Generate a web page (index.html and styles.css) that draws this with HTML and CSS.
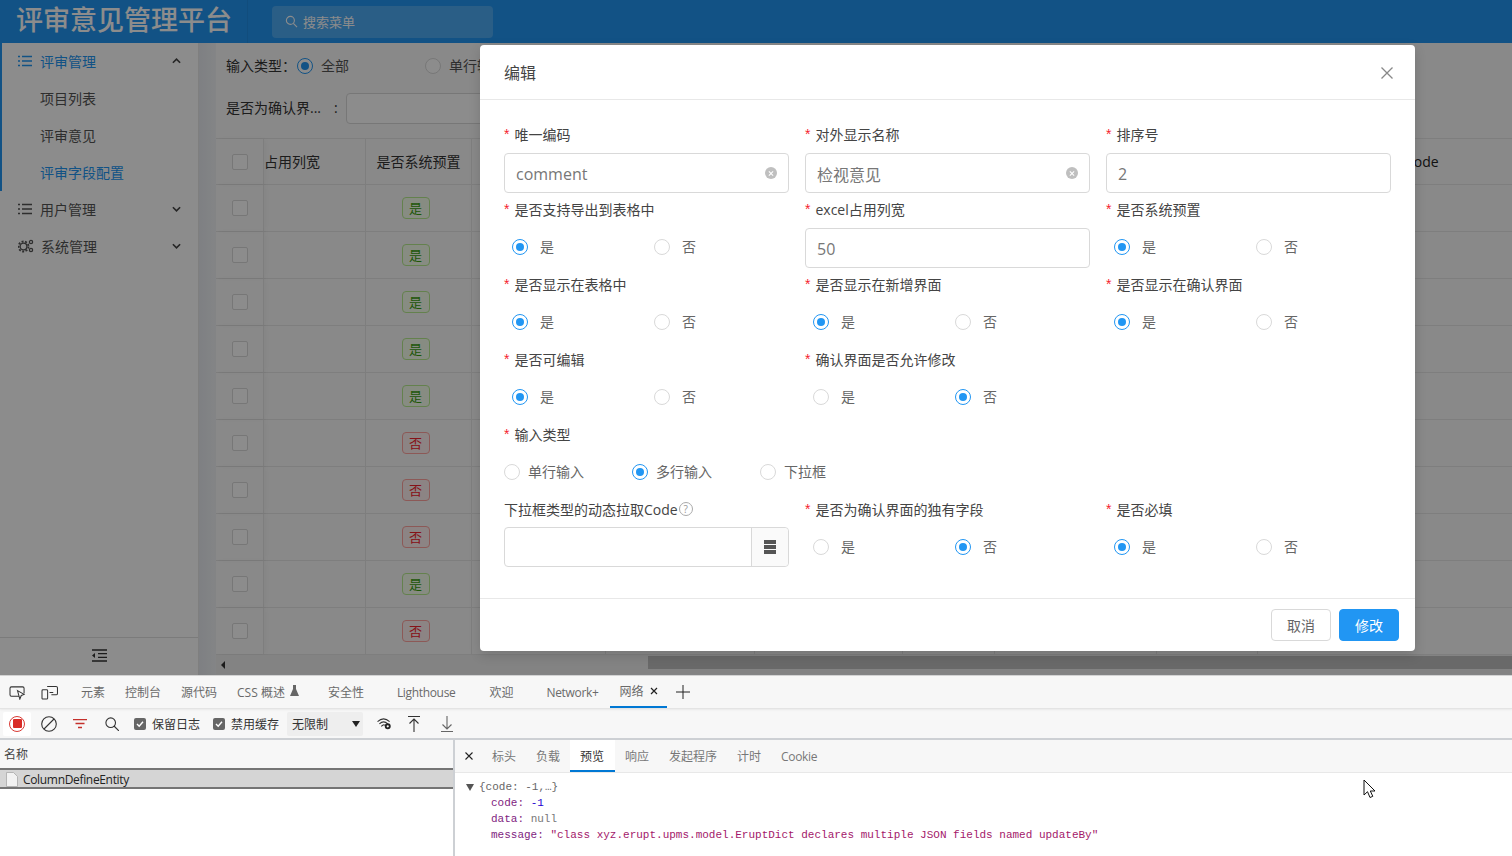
FILE: index.html
```html
<!DOCTYPE html>
<html lang="zh-CN">
<head>
<meta charset="utf-8">
<title>评审意见管理平台</title>
<link rel="stylesheet" href="styles.css">
</head>
<body>
<div class="app">
  <header class="topbar">
    <div class="brand">评审意见管理平台</div>
    <div class="search">
      <svg class="search-icon" viewBox="0 0 14 14"><circle cx="5.8" cy="5.8" r="4.3"/><path d="M9 9l4 4"/></svg>
      <span>搜索菜单</span>
    </div>
  </header>
  <div class="app-body">
    <aside class="sidebar">
      <nav class="menu">
        <div class="menu-group">
          <div class="menu-item active">
            <svg class="menu-icon" viewBox="0 0 14 12"><path d="M4 1.5h10M4 6h10M4 10.5h10M0 1.5h2M0 6h2M0 10.5h2"/></svg>
            <span class="menu-text">评审管理</span>
            <svg class="chev" viewBox="0 0 10 6"><path d="M1 5l4-4 4 4"/></svg>
          </div>
          <div class="menu-item sub">项目列表</div>
          <div class="menu-item sub">评审意见</div>
          <div class="menu-item sub active">评审字段配置</div>
        </div>
        <div class="menu-item">
          <svg class="menu-icon" viewBox="0 0 14 12"><path d="M4 1.5h10M4 6h10M4 10.5h10M0 1.5h2M0 6h2M0 10.5h2"/></svg>
          <span class="menu-text">用户管理</span>
          <svg class="chev" viewBox="0 0 10 6"><path d="M1 1l4 4 4-4"/></svg>
        </div>
        <div class="menu-item">
          <svg class="menu-icon gears" viewBox="0 0 16 14"><circle cx="5.5" cy="7.5" r="3.4"/><circle cx="5.5" cy="7.5" r="5" class="dash"/><circle cx="13" cy="3" r="1.6"/><circle cx="13" cy="11" r="1.6"/></svg>
          <span class="menu-text">系统管理</span>
          <svg class="chev" viewBox="0 0 10 6"><path d="M1 1l4 4 4-4"/></svg>
        </div>
      </nav>
      <div class="side-foot">
        <svg class="fold" viewBox="0 0 15 13"><path d="M0 1h15M6 4.7h9M6 8.3h9M0 12h15"/><path class="fold-arrow" d="M3 4v5L0 6.500z"/></svg>
      </div>
    </aside>
    <main class="content">
      <section class="filters">
        <div class="filter-row">
          <span class="filter-label">输入类型：</span>
          <span class="radio bg-radio on"></span><span class="bg-opt">全部</span>
          <span class="radio bg-radio second"></span><span class="bg-opt">单行输入</span>
        </div>
        <div class="filter-row lower">
          <span class="filter-label trunc">是否为确认界...</span>
          <span class="colon">:</span>
          <span class="filter-input"></span>
        </div>
      </section>
      <section class="table">
        <div class="tr th">
          <div class="td c0"><span class="check"></span></div>
          <div class="td c1 clip">占用列宽</div>
          <div class="td c2">是否系统预置</div>
          <div class="td c3"></div><div class="td c4"></div><div class="td c5"></div><div class="td c6"></div><div class="td c7"></div><div class="td c8"></div>
          <div class="td c9 code-head">Code</div>
        </div>
        <div class="tr"><div class="td c0"><span class="check"></span></div><div class="td c1"></div><div class="td c2"><span class="tag yes">是</span></div><div class="td c3"></div><div class="td c4"></div><div class="td c5"></div><div class="td c6"></div><div class="td c7"></div><div class="td c8"></div><div class="td c9"></div></div>
        <div class="tr"><div class="td c0"><span class="check"></span></div><div class="td c1"></div><div class="td c2"><span class="tag yes">是</span></div><div class="td c3"></div><div class="td c4"></div><div class="td c5"></div><div class="td c6"></div><div class="td c7"></div><div class="td c8"></div><div class="td c9"></div></div>
        <div class="tr"><div class="td c0"><span class="check"></span></div><div class="td c1"></div><div class="td c2"><span class="tag yes">是</span></div><div class="td c3"></div><div class="td c4"></div><div class="td c5"></div><div class="td c6"></div><div class="td c7"></div><div class="td c8"></div><div class="td c9"></div></div>
        <div class="tr"><div class="td c0"><span class="check"></span></div><div class="td c1"></div><div class="td c2"><span class="tag yes">是</span></div><div class="td c3"></div><div class="td c4"></div><div class="td c5"></div><div class="td c6"></div><div class="td c7"></div><div class="td c8"></div><div class="td c9"></div></div>
        <div class="tr"><div class="td c0"><span class="check"></span></div><div class="td c1"></div><div class="td c2"><span class="tag yes">是</span></div><div class="td c3"></div><div class="td c4"></div><div class="td c5"></div><div class="td c6"></div><div class="td c7"></div><div class="td c8"></div><div class="td c9"></div></div>
        <div class="tr"><div class="td c0"><span class="check"></span></div><div class="td c1"></div><div class="td c2"><span class="tag no">否</span></div><div class="td c3"></div><div class="td c4"></div><div class="td c5"></div><div class="td c6"></div><div class="td c7"></div><div class="td c8"></div><div class="td c9"></div></div>
        <div class="tr"><div class="td c0"><span class="check"></span></div><div class="td c1"></div><div class="td c2"><span class="tag no">否</span></div><div class="td c3"></div><div class="td c4"></div><div class="td c5"></div><div class="td c6"></div><div class="td c7"></div><div class="td c8"></div><div class="td c9"></div></div>
        <div class="tr"><div class="td c0"><span class="check"></span></div><div class="td c1"></div><div class="td c2"><span class="tag no">否</span></div><div class="td c3"></div><div class="td c4"></div><div class="td c5"></div><div class="td c6"></div><div class="td c7"></div><div class="td c8"></div><div class="td c9"></div></div>
        <div class="tr"><div class="td c0"><span class="check"></span></div><div class="td c1"></div><div class="td c2"><span class="tag yes">是</span></div><div class="td c3"></div><div class="td c4"></div><div class="td c5"></div><div class="td c6"></div><div class="td c7"></div><div class="td c8"></div><div class="td c9"></div></div>
        <div class="tr"><div class="td c0"><span class="check"></span></div><div class="td c1"></div><div class="td c2"><span class="tag no">否</span></div><div class="td c3"></div><div class="td c4"></div><div class="td c5"></div><div class="td c6"></div><div class="td c7"></div><div class="td c8"></div><div class="td c9"></div></div>
      </section>
      <div class="hscroll">
        <svg class="hscroll-arrow" viewBox="0 0 4 8"><path d="M4 0v8L0 4z"/></svg>
        <div class="hscroll-thumb"></div>
      </div>
    </main>
  </div>
  <div class="mask"></div>
  <div class="modal">
    <div class="modal-head">
      <span class="modal-title">编辑</span>
      <svg class="modal-close" viewBox="0 0 12 12"><path d="M.5.500l11 11M11.500.500l-11 11"/></svg>
    </div>
    <form class="modal-body">
      <div class="field">
        <label class="lbl req">唯一编码</label>
        <div class="input">comment<span class="clear"></span></div>
      </div>
      <div class="field">
        <label class="lbl req">对外显示名称</label>
        <div class="input">检视意见<span class="clear"></span></div>
      </div>
      <div class="field">
        <label class="lbl req">排序号</label>
        <div class="input">2</div>
      </div>

      <div class="field">
        <label class="lbl req">是否支持导出到表格中</label>
        <div class="radios"><span class="opt"><span class="radio on"></span>是</span><span class="opt"><span class="radio"></span>否</span></div>
      </div>
      <div class="field">
        <label class="lbl req">excel占用列宽</label>
        <div class="input">50</div>
      </div>
      <div class="field">
        <label class="lbl req">是否系统预置</label>
        <div class="radios"><span class="opt"><span class="radio on"></span>是</span><span class="opt"><span class="radio"></span>否</span></div>
      </div>

      <div class="field">
        <label class="lbl req">是否显示在表格中</label>
        <div class="radios"><span class="opt"><span class="radio on"></span>是</span><span class="opt"><span class="radio"></span>否</span></div>
      </div>
      <div class="field">
        <label class="lbl req">是否显示在新增界面</label>
        <div class="radios"><span class="opt"><span class="radio on"></span>是</span><span class="opt"><span class="radio"></span>否</span></div>
      </div>
      <div class="field">
        <label class="lbl req">是否显示在确认界面</label>
        <div class="radios"><span class="opt"><span class="radio on"></span>是</span><span class="opt"><span class="radio"></span>否</span></div>
      </div>

      <div class="field">
        <label class="lbl req">是否可编辑</label>
        <div class="radios"><span class="opt"><span class="radio on"></span>是</span><span class="opt"><span class="radio"></span>否</span></div>
      </div>
      <div class="field span2">
        <label class="lbl req">确认界面是否允许修改</label>
        <div class="radios"><span class="opt"><span class="radio"></span>是</span><span class="opt"><span class="radio on"></span>否</span></div>
      </div>

      <div class="field span3">
        <label class="lbl req">输入类型</label>
        <div class="radios flush"><span class="opt"><span class="radio"></span>单行输入</span><span class="opt"><span class="radio on"></span>多行输入</span><span class="opt"><span class="radio"></span>下拉框</span></div>
      </div>

      <div class="field">
        <label class="lbl tight">下拉框类型的动态拉取Code<span class="help">?</span></label>
        <div class="input group"><span class="addon">
          <svg class="addon-icon" viewBox="0 0 12 14"><path d="M0 0h12v4H0zM0 5h12v4H0zM0 10h12v4H0z"/></svg>
        </span></div>
      </div>
      <div class="field">
        <label class="lbl req">是否为确认界面的独有字段</label>
        <div class="radios"><span class="opt"><span class="radio"></span>是</span><span class="opt"><span class="radio on"></span>否</span></div>
      </div>
      <div class="field">
        <label class="lbl req">是否必填</label>
        <div class="radios"><span class="opt"><span class="radio on"></span>是</span><span class="opt"><span class="radio"></span>否</span></div>
      </div>
    </form>
    <div class="modal-foot">
      <button class="btn" type="button">取消</button>
      <button class="btn primary" type="button">修改</button>
    </div>
  </div>
</div>

<div class="devtools">
  <div class="dt-tabs">
    <svg class="dt-ico" viewBox="0 0 18 16"><path d="M11 12H2.500Q1 12 1 10.500v-7Q1 2 2.500 2h12Q16 2 16 3.500V9"/><path class="solid" d="M9 6l7 4-3 1.200L11.500 15z"/></svg>
    <svg class="dt-ico second" viewBox="0 0 18 16"><path d="M6.500 1.500h9.500q1.500 0 1.500 1.500v6q0 1.500-1.500 1.500H11"/><rect x="1" y="5" width="6" height="10" rx="1"/><path d="M9 8h4"/></svg>
    <span class="tab first">元素</span>
    <span class="tab">控制台</span>
    <span class="tab">源代码</span>
    <span class="tab css">CSS 概述</span>
    <svg class="flask" viewBox="0 0 9 11"><path d="M3 0h3v4l3 7H0l3-7z"/></svg>
    <span class="tab wide">安全性</span>
    <span class="tab wide latin lh">Lighthouse</span>
    <span class="tab wide">欢迎</span>
    <span class="tab wide latin">Network+</span>
    <span class="tab current">网络<svg class="tab-x" viewBox="0 0 8 8"><path d="M1 1l6 6M7 1L1 7"/></svg></span>
    <svg class="tab-plus" viewBox="0 0 14 14"><path d="M7 0v14M0 7h14"/></svg>
  </div>
  <div class="dt-toolbar">
    <span class="record"><span class="record-dot"></span></span>
    <svg class="tool block" viewBox="0 0 16 16"><circle cx="8" cy="8" r="7.300"/><path d="M3 13L13 3"/></svg>
    <svg class="tool filter" viewBox="0 0 14 10"><path d="M0 .500h14M2.500 4.500h9M5 8.500h4"/></svg>
    <svg class="tool find" viewBox="0 0 14 14"><circle cx="5.700" cy="5.700" r="4.800"/><path d="M9 9l5 5"/></svg>
    <span class="chk"><svg viewBox="0 0 12 12"><path d="M3 6l2.200 2.300L9 3.800"/></svg></span><span class="chk-text">保留日志</span>
    <span class="chk"><svg viewBox="0 0 12 12"><path d="M3 6l2.200 2.300L9 3.800"/></svg></span><span class="chk-text">禁用缓存</span>
    <span class="throttle">无限制<span class="caret"></span></span>
    <svg class="tool wifi" viewBox="0 0 16 14"><path d="M.500 5Q7-1 13.500 5M2.500 7.500Q7 3 11.500 7.500M4.500 10Q7 7.500 8.500 9"/><circle class="gear" cx="11.500" cy="10" r="2.200"/></svg>
    <svg class="tool up" viewBox="0 0 14 16"><path d="M1 .500h12M7 3v13M2.500 7.500L7 3l4.500 4.500"/></svg>
    <svg class="tool down" viewBox="0 0 14 16"><path d="M1 15.500h12M7 0v13M2.500 8.500L7 13l4.500-4.500"/></svg>
  </div>
  <div class="dt-split">
    <div class="names">
      <div class="names-head">名称</div>
      <div class="names-row">
        <svg class="doc" viewBox="0 0 12 15"><path d="M.500.500h7l4 4v10h-11z"/></svg>
        <span class="latin">ColumnDefineEntity</span>
      </div>
    </div>
    <div class="detail">
      <div class="detail-tabs">
        <svg class="detail-x" viewBox="0 0 8 8"><path d="M.500.500l7 7M7.500.500l-7 7"/></svg>
        <span class="dtab">标头</span>
        <span class="dtab">负载</span>
        <span class="dtab current">预览</span>
        <span class="dtab">响应</span>
        <span class="dtab">发起程序</span>
        <span class="dtab">计时</span>
        <span class="dtab latin">Cookie</span>
      </div>
      <div class="json">
        <div class="json-line root"><span class="tri"></span>{code: -1,…}</div>
        <div class="json-line"><span class="k">code:</span> <span class="n">-1</span></div>
        <div class="json-line"><span class="k">data:</span> <span class="nul">null</span></div>
        <div class="json-line"><span class="k">message:</span> <span class="s">"class xyz.erupt.upms.model.EruptDict declares multiple JSON fields named updateBy"</span></div>
      </div>
    </div>
  </div>
  <svg class="cursor" viewBox="0 0 13 20"><path d="M1 1v15l3.500-3.300L7 18.500l2.800-1.200L7.300 12H12z"/></svg>
</div>
</body>
</html>
```
FILE: styles.css
```css
* { box-sizing: border-box; }
html, body { margin: 0; padding: 0; }
body {
  width: 1512px;
  height: 856px;
  overflow: hidden;
  background: #fff;
  font-family: "Open Sans", "Noto Sans CJK SC", sans-serif;
  font-size: 14px;
  color: #333;
  position: relative;
}
svg { display: block; flex: none; }

.app { position: relative; height: 675px; overflow: hidden; background: #f0f2f5; }
.mask { position: absolute; inset: 0; background: rgba(0, 0, 0, .45); }

/* top bar */
.topbar { height: 43px; background: #2196f3; display: flex; align-items: center; }
.brand {
  width: 248px; height: 43px; padding: 0 0 0 16px;
  font-size: 27px; line-height: 38px; color: #fff; font-weight: 500;
  font-family: "Noto Sans CJK SC", sans-serif;
  border-right: 1px solid rgba(0, 0, 0, .06);
  white-space: nowrap;
}
.search {
  margin-left: 24px; width: 221px; height: 32px; border-radius: 4px;
  background: rgba(255, 255, 255, .2); color: #fff; font-size: 13px;
  display: flex; align-items: center; padding-left: 13px; gap: 5px;
}
.search-icon { width: 13px; height: 13px; fill: none; stroke: #fff; stroke-width: 1.200; }

.app-body { display: flex; height: 632px; }

/* sidebar */
.sidebar {
  width: 199px; flex: none; background: #fff; border-right: 1px solid #e8e8e8;
  display: flex; flex-direction: column; justify-content: space-between;
}
.menu-group { border-left: 2px solid #2196f3; }
.menu-item {
  height: 37px; display: flex; align-items: center; padding: 0 0 2px 18px;
  color: #555; font-size: 14px; position: relative;
}
.menu-group .menu-item { padding-left: 16px; }
.menu-group .menu-item.sub { padding-left: 38px; }
.menu-item.active { color: #2196f3; }
.menu-icon { width: 14px; height: 12px; fill: none; stroke: currentColor; stroke-width: 1.300; margin-right: 8px; }
.gears { width: 16px; height: 14px; margin-right: 7px; }
.gears .dash { stroke-dasharray: 2 1.500; stroke-width: 1.800; }
.menu-text { flex: 1; }
.chev { width: 9px; height: 6px; fill: none; stroke: #444; stroke-width: 1.800; margin-right: 17px; }
.side-foot { height: 38px; border-top: 1px solid #e0e0e0; padding-bottom: 2px; display: flex; align-items: center; justify-content: center; }
.fold { width: 15px; height: 13px; fill: none; stroke: #333; stroke-width: 1.300; }
.fold-arrow { fill: #333; stroke: none; }

/* content */
.content {
  flex: 1; min-width: 0; padding-left: 17px; display: flex; flex-direction: column;
  background: linear-gradient(90deg, #e6e9ee, #f0f2f5 17px);
  overflow: hidden;
}
.filters { height: 96px; flex: none; background: #fafafa; padding: 7px 0 0 10px; border-bottom: 1px solid #e5e5e5; }
.filter-row { height: 32px; display: flex; align-items: center; padding-bottom: 2px; color: #333; white-space: nowrap; }
.filter-row.lower { margin-top: 10px; }
.filter-label { width: 71px; }
.filter-label.trunc { width: 100px; }
.colon { width: 20px; padding-left: 8px; }
.filter-input { width: 300px; height: 31px; margin-top: 3px; background: #fff; border: 1px solid #d9d9d9; border-radius: 4px; }
.bg-opt { width: 104px; margin-left: 8px; color: #555; }
.bg-radio { margin-top: 2px; }

.table { flex: none; width: 1296px; background: #fafafa; }
.tr { height: 47px; display: flex; border-bottom: 1px solid #e5e5e5; flex: none; }
.th { height: 46px; color: #333; }
.td { height: 100%; border-right: 1px solid #e5e5e5; display: flex; align-items: center; justify-content: center; white-space: nowrap; overflow: hidden; flex: none; }
.th .c1, .th .c2 { padding-bottom: 2px; }
.c0 { width: 48px; box-shadow: 2px 0 6px rgba(0, 0, 0, .04); }
.c1 { width: 102px; }
.c1.clip { justify-content: flex-start; padding-left: 0; }
.c2 { width: 106px; }
.c3 { width: 134px; }
.c4 { width: 149px; }
.c5 { width: 148px; }
.c6 { width: 92px; }
.c7 { width: 162px; }
.c8 { width: 101px; }
.c9 { width: 254px; border-right: 0; }
.code-head { justify-content: flex-start; padding-left: 147px; font-size: 14px; color: #222; }
.check { width: 16px; height: 16px; background: #fff; border: 1px solid #d9d9d9; border-radius: 2px; }
.tag { width: 28px; height: 22px; margin-left: -6px; padding-bottom: 2px; border: 1px solid; border-radius: 4px; display: flex; align-items: center; justify-content: center; font-size: 13px; }
.tag.yes { background: #f6ffed; border-color: #b7eb8f; color: #389e0d; }
.tag.no { background: #fff1f0; border-color: #ffa39e; color: #f5222d; }

.hscroll { height: 19px; flex: none; background: #efefef; position: relative; display: flex; align-items: center; padding-left: 5px; }
.hscroll-arrow { width: 4px; height: 8px; fill: #333; }
.hscroll-thumb { height: 13px; margin-left: 423px; flex: 1; background: #bfbfbf; align-self: flex-start; margin-top: 1px; }

/* radio */
.radio { width: 16px; height: 16px; border-radius: 50%; border: 1px solid #d9d9d9; background: #fff; display: inline-block; flex: none; position: relative; }
.radio.on { border-color: #2196f3; }
.radio.on::after { content: ""; position: absolute; inset: 3px; border-radius: 50%; background: #2196f3; }

/* modal */
.modal {
  position: absolute; left: 480px; top: 45px; width: 935px; height: 606px;
  background: #fff; border-radius: 4px; display: flex; flex-direction: column;
  box-shadow: 0 4px 12px rgba(0, 0, 0, .15);
}
.modal-head { height: 55px; flex: none; padding: 0 22px 0 24px; border-bottom: 1px solid #e8e8e8; display: flex; align-items: center; justify-content: space-between; }
.modal-title { font-size: 16px; color: #444; }
.modal-close { width: 12px; height: 12px; margin-top: 2px; fill: none; stroke: #888; stroke-width: 1.300; }
.modal-body {
  flex: 1; padding: 24px 24px 0; display: grid;
  grid-template-columns: repeat(3, 285px); grid-auto-rows: 75px; column-gap: 16px;
}
.field { min-width: 0; }
.span2 { grid-column: span 2; }
.span3 { grid-column: span 3; }
.lbl { display: flex; align-items: center; height: 22px; margin-bottom: 7px; padding-bottom: 2px; font-size: 14px; color: #444; white-space: nowrap; }
.lbl.tight { margin-bottom: 6px; }
.lbl.req::before { content: "*"; color: #f5222d; margin-right: 5px; font-size: 14px; font-family: "Liberation Sans", sans-serif; }
.help { width: 14px; height: 14px; margin-left: 1px; border: 1px solid #aaa; border-radius: 50%; color: #999; font-size: 10px; display: flex; align-items: center; justify-content: center; }
.input {
  height: 40px; border: 1px solid #d9d9d9; border-radius: 4px; padding: 2px 11px 0;
  font-size: 16px; color: #777; display: flex; align-items: center; position: relative;
  font-family: "Open Sans", "Noto Sans CJK SC", sans-serif;
}
.clear { position: absolute; right: 11px; top: 13px; width: 12px; height: 12px; border-radius: 50%; background: #bfbfbf; }
.clear::before, .clear::after { content: ""; position: absolute; left: 3px; top: 5.500px; width: 6px; height: 1px; background: #fff; transform: rotate(45deg); }
.clear::after { transform: rotate(-45deg); }
.input.group { padding: 0; justify-content: flex-end; }
.addon { width: 37px; height: 100%; border-left: 1px solid #d9d9d9; background: #fafafa; border-radius: 0 4px 4px 0; display: flex; align-items: center; justify-content: center; }
.addon-icon { width: 12px; height: 14px; fill: #555; }
.radios { height: 38px; display: flex; align-items: center; padding-left: 8px; color: #666; font-size: 14px; }
.opt { width: 142px; flex: none; display: flex; align-items: center; gap: 12px; padding-bottom: 2px; }
.opt .radio { margin-top: 2px; }
.radios.flush { padding-left: 0; }
.radios.flush .opt { width: 128px; gap: 8px; }
.modal-foot { height: 53px; flex: none; border-top: 1px solid #e8e8e8; padding-right: 16px; display: flex; align-items: center; justify-content: flex-end; gap: 8px; }
.btn { width: 60px; height: 32px; border: 1px solid #d9d9d9; border-radius: 4px; background: #fff; color: #666; font: 14px "Open Sans", "Noto Sans CJK SC", sans-serif; padding: 0; }
.btn.primary { background: #2196f3; border-color: #2196f3; color: #fff; }

/* devtools */
.devtools { height: 181px; position: relative; background: #fff; border-top: 1px solid #d4d4d4; font-size: 12px; color: #555; }
.latin { letter-spacing: -.33px; }
.dt-tabs { height: 33px; background: #f7f7f7; border-bottom: 1px solid #e4e4e4; display: flex; align-items: center; padding-left: 9px; box-shadow: 0 1px 2px rgba(0,0,0,.06); position: relative; white-space: nowrap; }
.dt-ico { width: 17px; height: 15px; fill: none; stroke: #333; stroke-width: 1.100; }
.dt-ico .solid { fill: #fff; }
.dt-ico.second { margin-left: 15px; margin-right: 23px; }
.tab { margin-right: 20px; color: #6a6a6a; height: 100%; display: flex; align-items: center; }
.tab.wide { margin-right: 33px; }
.tab.wide.lh { margin-right: 34px; }
.tab.css { margin-right: 5px; }
.flask { width: 9px; height: 11px; fill: #666; margin-right: 29px; margin-top: -3px; }
.tab.current { margin: 0 0 0 -21px; padding: 0 9px; width: 57px; height: 32px; border-bottom: 2px solid #0078d4; justify-content: space-between; }
.tab-x { width: 8px; height: 8px; fill: none; stroke: #222; stroke-width: 1.200; }
.tab-plus { width: 14px; height: 14px; fill: none; stroke: #222; stroke-width: 1; margin-left: 9px; }

.dt-toolbar { height: 31px; background: #f7f7f7; border-bottom: 2px solid #cdd0d4; display: flex; align-items: center; padding-left: 3px; color: #333; }
.record { width: 28px; height: 24px; background: #fff; display: flex; align-items: center; justify-content: center; border-radius: 2px; }
.record-dot { width: 16px; height: 16px; border: 1.500px solid #d93a34; border-radius: 50%; position: relative; }
.record-dot::after { content: ""; position: absolute; inset: 2.500px; background: #d92b26; border-radius: 1px; }
.tool { fill: none; stroke: #333; stroke-width: 1.100; }
.block { width: 16px; height: 16px; margin-left: 10px; }
.filter { width: 14px; height: 10px; margin-left: 16px; stroke: #c4302b; stroke-width: 1.300; }
.find { width: 14px; height: 14px; margin-left: 18px; }
.chk { width: 12px; height: 12px; margin-left: 15px; background: #666; border-radius: 2px; }
.chk svg { width: 12px; height: 12px; fill: none; stroke: #fff; stroke-width: 1.400; }
.chk-text { margin-left: 6px; }
.chk-text + .chk { margin-left: 13px; }
.throttle { width: 76px; height: 24px; margin-left: 8px; background: #eeeeee; border-radius: 2px; padding: 0 3px 0 5px; display: flex; align-items: center; justify-content: space-between; }
.caret { width: 0; height: 0; border: 4.500px solid transparent; border-top: 6px solid #222; border-bottom: 0; }
.wifi { width: 15px; height: 13px; margin-left: 14px; }
.wifi .gear { fill: #f7f7f7; stroke: #222; stroke-width: 2; }
.up { width: 14px; height: 16px; margin-left: 15px; }
.down { width: 14px; height: 16px; margin-left: 19px; stroke: #666; }

.dt-split { height: 116px; display: flex; }
.names { width: 455px; flex: none; border-right: 2px solid #cdd0d4; }
.names-head { height: 28px; background: #f7f7f7; padding-left: 4px; display: flex; align-items: center; color: #444; }
.names-row { height: 21px; background: #d5d5d5; border: solid #757575; border-width: 2px 0; display: flex; align-items: center; padding-left: 4px; padding-top: 1px; color: #222; }
.doc { width: 12px; height: 15px; margin: 0 5px 0 2px; fill: #f2f2f2; stroke: #aaa; stroke-width: .8; }
.detail { flex: 1; min-width: 0; }
.detail-tabs { height: 33px; background: #f7f7f7; display: flex; align-items: center; padding-left: 10px; border-bottom: 1px solid #e8e8e8; color: #777; }
.detail-x { width: 8px; height: 8px; fill: none; stroke: #222; stroke-width: 1.100; margin-right: 9px; }
.dtab { height: 100%; display: flex; align-items: center; padding: 2px 10px 0; border-bottom: 2px solid transparent; }
.dtab.current { width: 45px; background: #fff; border-bottom-color: #0078d4; color: #333; }
.json { padding: 6px 0 0 36px; font: 11px/16px "Liberation Mono", monospace; white-space: nowrap; color: #333; }
.json-line.root { margin-left: -25px; display: flex; align-items: center; color: #666; }
.tri { width: 0; height: 0; border: 4px solid transparent; border-top: 7px solid #555; border-bottom: 0; margin-right: 5px; }
.k { color: #7f1d7f; }
.n { color: #1c00cf; }
.nul { color: #777; }
.s { color: #a3186a; }
.cursor { position: absolute; left: 1363px; top: 103px; width: 13px; height: 20px; fill: #fff; stroke: #111; stroke-width: 1; }
```
